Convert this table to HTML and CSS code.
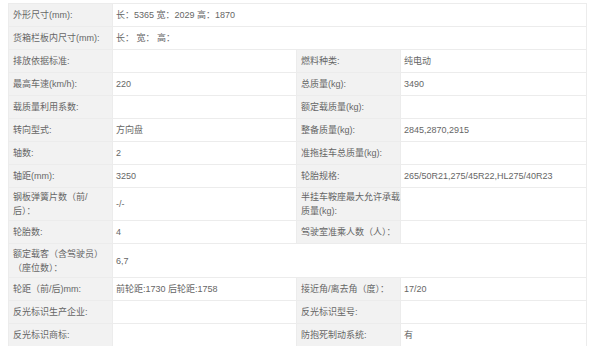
FILE: index.html
```html
<!DOCTYPE html>
<html lang="zh-CN">
<head>
<meta charset="utf-8">
<title>参数</title>
<link rel="stylesheet" href="styles.css">
</head>
<body>
<div class="wrap">
<table class="spec">
<colgroup><col class="c-lab"><col class="c-val1"><col class="c-lab"><col class="c-val2"></colgroup>
<tbody>
<tr><td class="lab">外形尺寸(mm):</td><td colspan="3">长：5365 宽：2029 高：1870</td></tr>
<tr><td class="lab">货箱栏板内尺寸(mm):</td><td colspan="3">长： 宽： 高：</td></tr>
<tr><td class="lab">排放依据标准:</td><td></td><td class="lab">燃料种类:</td><td>纯电动</td></tr>
<tr><td class="lab">最高车速(km/h):</td><td>220</td><td class="lab">总质量(kg):</td><td>3490</td></tr>
<tr><td class="lab">载质量利用系数:</td><td></td><td class="lab">额定载质量(kg):</td><td></td></tr>
<tr><td class="lab">转向型式:</td><td>方向盘</td><td class="lab">整备质量(kg):</td><td>2845,2870,2915</td></tr>
<tr><td class="lab">轴数:</td><td>2</td><td class="lab">准拖挂车总质量(kg):</td><td></td></tr>
<tr><td class="lab">轴距(mm):</td><td>3250</td><td class="lab">轮胎规格:</td><td>265/50R21,275/45R22,HL275/40R23</td></tr>
<tr class="tall"><td class="lab">钢板弹簧片数（前/<br>后）：</td><td>-/-</td><td class="lab">半挂车鞍座最大允许承载<br>质量(kg):</td><td></td></tr>
<tr><td class="lab">轮胎数:</td><td>4</td><td class="lab">驾驶室准乘人数（人）：</td><td></td></tr>
<tr class="tall2"><td class="lab">额定载客（含驾驶员）<br>（座位数）：</td><td colspan="3">6,7</td></tr>
<tr><td class="lab">轮距（前/后)mm:</td><td>前轮距:1730 后轮距:1758</td><td class="lab">接近角/离去角（度）：</td><td>17/20</td></tr>
<tr><td class="lab">反光标识生产企业:</td><td></td><td class="lab">反光标识型号:</td><td></td></tr>
<tr><td class="lab">反光标识商标:</td><td></td><td class="lab">防抱死制动系统:</td><td>有</td></tr>
</tbody>
</table>
</div>
</body>
</html>
```

FILE: styles.css
```css
html, body {
  margin: 0;
  padding: 0;
  background: #fff;
}
.wrap {
  padding: 3px 0 0 8px;
}
.spec {
  width: 578px;
  border-collapse: collapse;
  table-layout: fixed;
  font-family: "Liberation Sans", "Noto Sans CJK SC", sans-serif;
  font-size: 9px;
  color: #666;
  border: 1px solid #ececec;
}
.c-lab { width: 104px; }
.c-val1 { width: 184px; }
.c-val2 { width: 186px; }
.spec tr { height: 23px; }
.spec tr.tall { height: 33px; }
.spec tr.tall2 { height: 34px; }
.spec td {
  border: 1px solid #ececec;
  padding: 2px 3px;
  line-height: 14px;
  vertical-align: middle;
  white-space: nowrap;
}
.spec td.lab {
  background: #f2f2f2;
  padding-left: 4px;
}
```
